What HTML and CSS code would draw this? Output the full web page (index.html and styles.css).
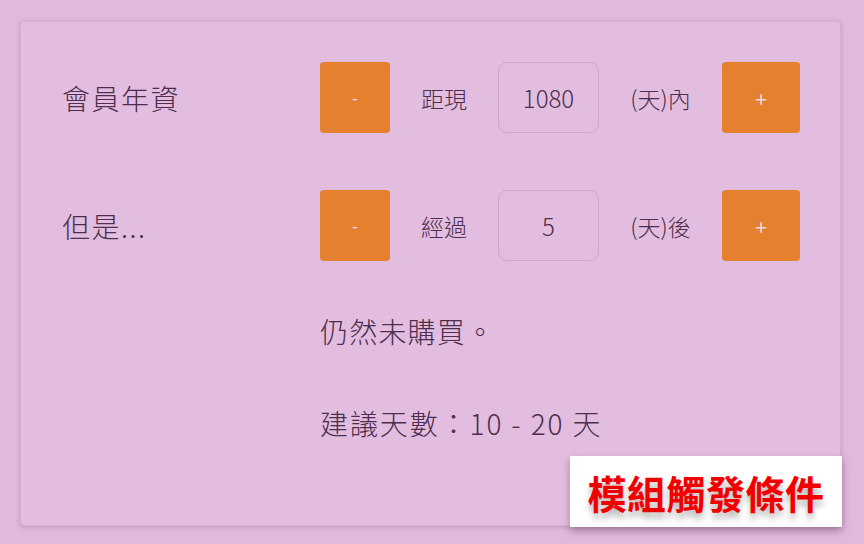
FILE: index.html
```html
<!DOCTYPE html>
<html lang="zh-Hant">
<head>
<meta charset="utf-8">
<title>模組觸發條件</title>
<link rel="stylesheet" href="styles.css">
</head>
<body>
<div class="page">
  <div class="card">
    <div class="row">
      <div class="label">會員年資</div>
      <button class="btn btn-minus">-</button>
      <div class="word">距現</div>
      <div class="field">1080</div>
      <div class="word">(天)內</div>
      <button class="btn btn-plus">+</button>
    </div>
    <div class="row">
      <div class="label">但是...</div>
      <button class="btn btn-minus">-</button>
      <div class="word">經過</div>
      <div class="field">5</div>
      <div class="word">(天)後</div>
      <button class="btn btn-plus">+</button>
    </div>
    <div class="notes">
      <p class="note">仍然未購買。</p>
      <p class="note note-hint">建議天數：10 - 20 天</p>
    </div>
    <div class="badge">模組觸發條件</div>
  </div>
</div>
</body>
</html>
```

FILE: styles.css
```css
html, body {
  margin: 0;
  padding: 0;
  background: #dfbadc;
}
body {
  width: 864px;
  height: 544px;
  overflow: hidden;
  font-family: "Noto Sans CJK TC", "Noto Sans", sans-serif;
  font-weight: 300;
  color: #4d2e4c;
}
.page {
  padding: 21px 23px 0 20px;
}
.card {
  position: relative;
  box-sizing: border-box;
  height: 505px;
  background: #e2bddf;
  border: 1px solid #d6b0d3;
  border-radius: 4px;
  box-shadow: 0 1px 4px rgba(90, 40, 90, 0.25);
  padding: 40px 0 0 41px;
}
.row {
  display: grid;
  grid-template-columns: 258px 70px 108px 101px 123px 78px;
  align-items: center;
  height: 71px;
  margin-bottom: 57px;
}
.label {
  font-size: 28px;
  letter-spacing: 1.5px;
  line-height: 40px;
}
.btn {
  height: 71px;
  border: none;
  border-radius: 4px;
  background: #e4802e;
  color: #f3d6e3;
  font-family: "Noto Sans", sans-serif;
  font-weight: 400;
  padding: 0;
  margin: 0;
}
.btn-minus {
  font-size: 18px;
}
.btn-plus {
  font-size: 22px;
}
.word {
  text-align: center;
  font-size: 23px;
  line-height: 30px;
}
.field {
  box-sizing: border-box;
  height: 71px;
  border: 1px solid #cfa5cc;
  border-radius: 9px;
  display: flex;
  align-items: center;
  justify-content: center;
  font-size: 24px;
}
.notes {
  margin-top: -7px;
  padding-left: 258px;
}
.note {
  margin: 0 0 52px 0;
  font-size: 28px;
  line-height: 40px;
  letter-spacing: 1.2px;
}
.note-hint {
  letter-spacing: 1.9px;
}
.badge {
  position: absolute;
  right: -2px;
  bottom: -2px;
  width: 272px;
  height: 71px;
  background: #ffffff;
  box-shadow: 0 4px 8px rgba(60, 20, 60, 0.35);
  display: flex;
  align-items: center;
  justify-content: center;
  color: #f20000;
  font-size: 39px;
  font-weight: 700;
  letter-spacing: 0.5px;
  text-shadow: 0 6px 6px rgba(0, 0, 0, 0.28);
}
```
